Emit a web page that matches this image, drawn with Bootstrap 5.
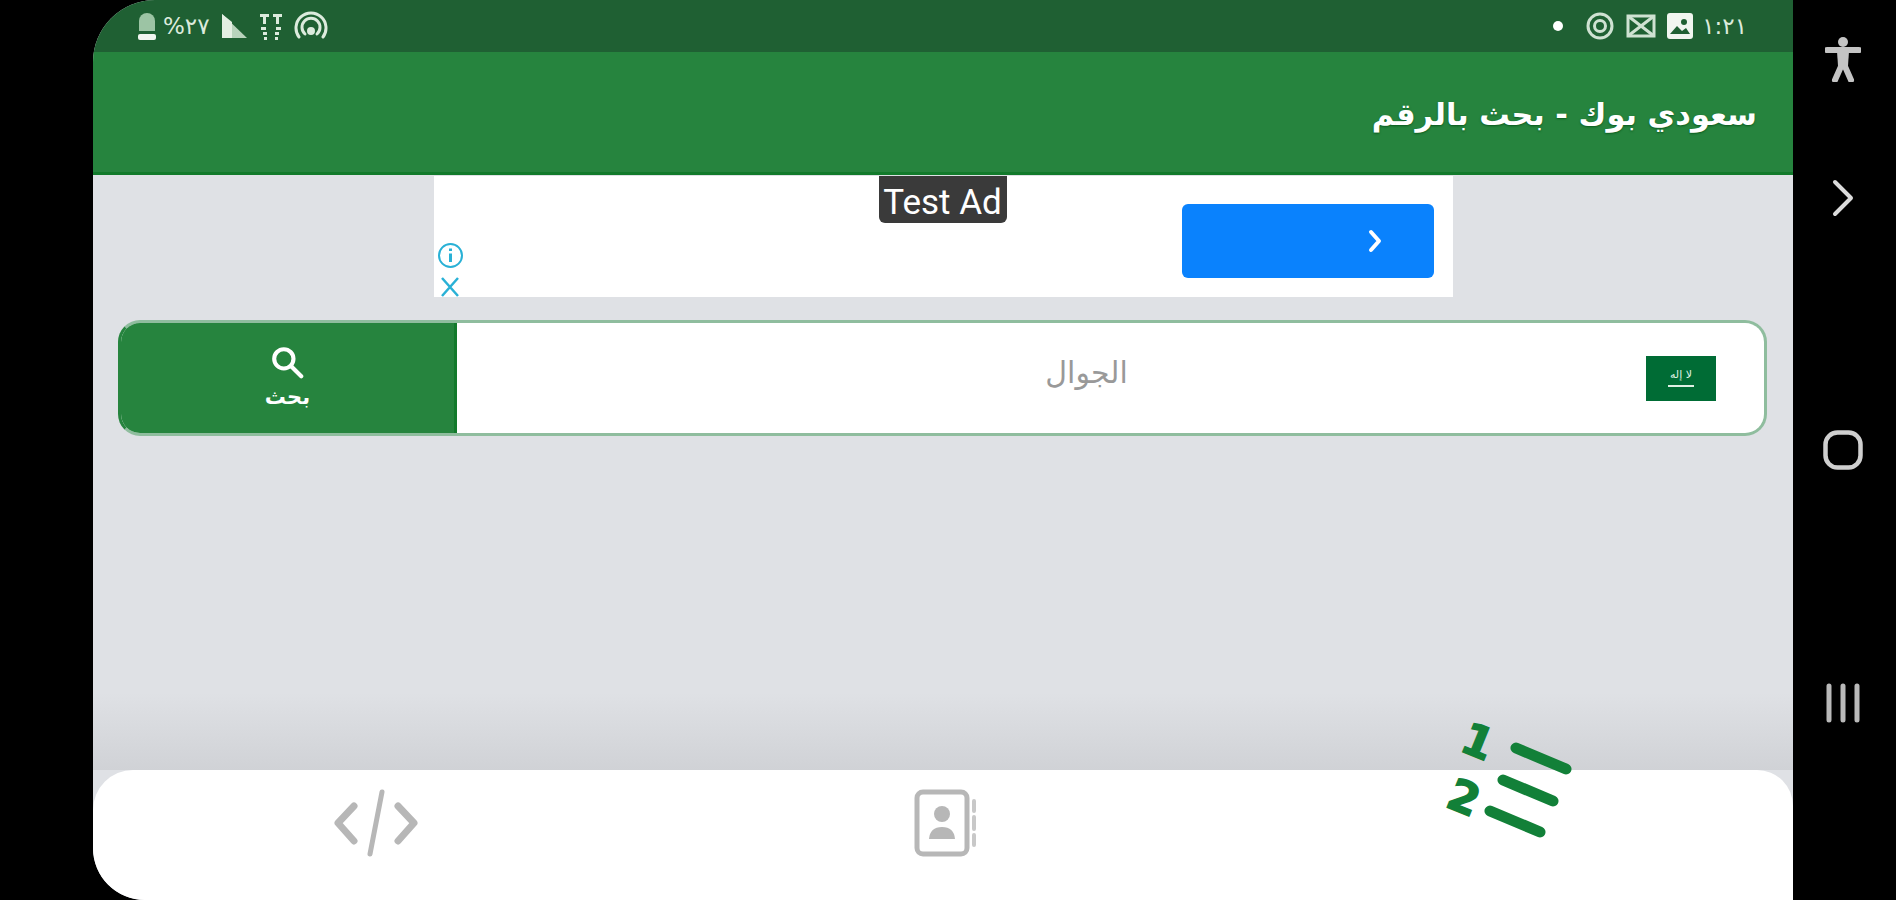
<!DOCTYPE html>
<html lang="ar">
<head>
<meta charset="utf-8">
<title>سعودي بوك</title>
<link rel="stylesheet" href="https://cdn.jsdelivr.net/npm/bootstrap@5.3.0/dist/css/bootstrap.min.css">
<style>
html,body{height:900px;overflow:hidden;background:#000;}
body{font-family:"DejaVu Sans","Liberation Sans",sans-serif;}
.stage{height:900px;background:#000;padding-left:93px;}
.phone{width:1700px;height:900px;overflow:hidden;border-radius:62px 0 0 52px;background:#dfe1e5;}
.statusline{height:52px;background:#1f6033;color:#dcebdd;padding:0 46px 0 44px;font-size:23px;font-family:"DejaVu Sans",sans-serif;}
.appline{height:123px;background:#26843e;border-bottom:3px solid #127a2b;padding:6px 36px 0 0;color:#fff;font-size:30.4px;font-weight:700;text-shadow:0 1px 2px #0a5a1e;}
.canvas{background:linear-gradient(#dfe1e5 0,#dfe1e5 87%,#d0d2d6 100%);}
.adbox{width:1019px;height:121px;background:#fff;margin:1px auto 0;position:relative;}
.adtag{position:absolute;top:0;left:445px;width:128px;height:47px;background:#3a3a3a;color:#fff;border-radius:0 0 6px 6px;font:400 35px/53px Roboto,sans-serif;text-align:center;}
.adbtn{width:252px;height:74px;background:#0a82fd;border-radius:6px;margin:28px 19px 0 0;padding-right:51px;}
.admarks{position:absolute;left:3px;top:66px;}
.searchbar{height:116px;margin:23px 26px 0 25px;border:3px solid #8fbd9e;border-left-color:#26843e;border-radius:22px;background:#fff;overflow:hidden;}
.searchbtn{width:336px;background:#26843e;border-right:3px solid #127a2b;color:#fff;font-size:21px;font-weight:700;}
.searchfield{color:#999;font-size:30px;padding:0 0 12px 70px;}
.flagbox{width:70px;height:45px;background:#006c35;color:#dff0e4;margin-right:48px;font-size:11px;line-height:1;}
.navstrip{height:130px;background:#fff;border-radius:40px 36px 0 0;position:relative;}
.navcell{width:33.333%;padding-bottom:24px;}
.listmark{position:absolute;left:1343px;top:-66px;}
.rail{width:103px;height:900px;padding:37px 3px 0 0;}
.railgap1{margin-top:97px;}
.railgap2{margin-top:213px;}
.stepa{margin-left:10px;}
.stepb{margin-left:10px;}
</style>
</head>
<body>
<div class="stage d-flex">
  <div class="phone d-flex flex-column">
    <div class="statusline d-flex align-items-center justify-content-between flex-shrink-0">
      <div class="d-flex align-items-center">
        <svg width="20" height="30" viewBox="0 0 20 30"><path d="M2 20 V10 a8 8 0 0 1 16 0 V20Z" fill="#9cc4a4"/><rect x="1" y="23" width="18" height="6" rx="2" fill="#f1f6f0"/></svg>
        <span style="margin-left:6px;letter-spacing:-1px">%٢٧</span>
        <svg class="stepa" width="28" height="26" viewBox="0 0 28 26"><path d="M2 1 V25 H27 Z" fill="#b8d3bc"/><path d="M2 1 V25 H12 V9 Z" fill="#e4efe3"/></svg>
        <svg class="stepb" width="26" height="30" viewBox="0 0 26 30" fill="#dcebdd"><path d="M2 3h9v3H8v7H5V6H2zM15 3h9v3h-3v7h-3V6h-3zM3 16h5v3H3zM18 16h5v3h-5zM5 21h4v3H5zM17 21h4v3h-4zM6 26h3v3H6zM17 26h3v3h-3z"/></svg>
        <svg class="stepb" width="34" height="30" viewBox="0 0 34 30" fill="none" stroke="#dcebdd" stroke-width="3" stroke-linecap="round"><path d="M5 26 A15 15 0 1 1 29 26"/><path d="M11 23 A9 9 0 1 1 23 23"/><circle cx="17" cy="20" r="2.5" fill="#dcebdd"/></svg>
      </div>
      <div class="d-flex align-items-center">
        <svg width="10" height="10" viewBox="0 0 10 10" style="margin-right:23px"><circle cx="5" cy="5" r="5" fill="#fff"/></svg>
        <svg width="28" height="28" viewBox="0 0 28 28" fill="none" stroke="#cfe2d2" style="margin-right:12px"><circle cx="14" cy="14" r="12" stroke-width="3"/><circle cx="14" cy="14" r="5.5" stroke-width="3"/></svg>
        <svg width="30" height="24" viewBox="0 0 30 24" fill="none" stroke="#cfe2d2" stroke-width="3" style="margin-right:11px"><rect x="2" y="2" width="26" height="20"/><path d="M2 2 L15 12 L28 2 M2 22 L15 12 L28 22"/></svg>
        <svg width="26" height="26" viewBox="0 0 26 26" style="margin-right:9px"><rect width="26" height="26" rx="3" fill="#f1f6f0"/><circle cx="17" cy="9" r="3" fill="#1f6033"/><path d="M3 21 L10 13 L15 18 L19 15 L23 21Z" fill="#1f6033"/></svg>
        <span style="letter-spacing:-1px">١:٢١</span>
      </div>
    </div>
    <div class="appline d-flex align-items-center justify-content-end flex-shrink-0">
      <span dir="rtl">سعودي بوك - بحث بالرقم</span>
    </div>
    <div class="canvas flex-grow-1 d-flex flex-column">
      <div class="adbox d-flex justify-content-end">
        <div class="adtag">Test Ad</div>
        <div class="admarks d-flex flex-column align-items-center gap-2">
          <svg width="27" height="27" viewBox="0 0 27 27" fill="none" stroke="#29b1d6" stroke-width="2"><circle cx="13.5" cy="13.5" r="11.5"/><path d="M13.5 11.5 V20 M13.5 6.5 V9" stroke-width="3"/></svg>
          <svg width="20" height="20" viewBox="0 0 20 20" fill="none" stroke="#29b1d6" stroke-width="2.5"><path d="M2 1 L18 19 M18 1 L2 19"/></svg>
        </div>
        <div class="adbtn d-flex align-items-center justify-content-end">
          <svg width="16" height="24" viewBox="0 0 16 24" fill="none" stroke="#fff" stroke-width="4" stroke-linecap="round" stroke-linejoin="round"><path d="M4 3 L12 12 L4 21"/></svg>
        </div>
      </div>
      <div class="searchbar d-flex">
        <div class="searchbtn d-flex flex-column align-items-center justify-content-center">
          <svg width="33" height="33" viewBox="0 0 36 36" fill="none" stroke="#fff" stroke-width="4.5" stroke-linecap="round"><circle cx="14" cy="14" r="10.5"/><path d="M22 22 L33 33"/></svg>
          <span dir="rtl" class="mt-1" style="line-height:28px">بحث</span>
        </div>
        <div class="searchfield flex-grow-1 d-flex align-items-center justify-content-center">
          <span dir="rtl">الجوال</span>
        </div>
        <div class="d-flex align-items-center">
          <div class="flagbox d-flex flex-column align-items-center justify-content-center">
            <span dir="rtl">لا إله</span>
            <svg width="26" height="4" viewBox="0 0 26 4" class="mt-1"><rect y="1" width="26" height="2" fill="#dff0e4"/></svg>
          </div>
        </div>
      </div>
    </div>
    <div class="navstrip d-flex flex-shrink-0">
      <div class="navcell d-flex align-items-center justify-content-center">
        <svg width="84" height="68" viewBox="0 0 84 68" fill="none" stroke="#b7b7b7" stroke-width="7" stroke-linecap="round" stroke-linejoin="round"><path d="M20 17 L4 34 L20 52 M64 17 L80 34 L64 52"/><path d="M48 3 L36 65" stroke-width="5"/></svg>
      </div>
      <div class="navcell d-flex align-items-center justify-content-center" style="padding-left:4px">
        <svg width="62" height="68" viewBox="0 0 62 68"><rect x="3" y="3" width="50" height="62" rx="6" fill="none" stroke="#b7b7b7" stroke-width="5"/><circle cx="28" cy="25" r="8" fill="#b7b7b7"/><path d="M15 50 Q16 38 28 38 Q40 38 41 50Z" fill="#b7b7b7"/><path d="M60 12 V22 M60 28 V40 M60 46 V56" stroke="#c8c8c8" stroke-width="4" stroke-linecap="round"/></svg>
      </div>
      <div class="navcell"></div>
      <svg class="listmark" width="150" height="140" viewBox="0 0 150 140" fill="none" stroke="#128038" stroke-width="11" stroke-linecap="round">
        <path d="M80 44 L130 65 M67 76 L117 97 M54 107 L104 128"/>
        <text x="0" y="0" transform="translate(22 46) rotate(22)" fill="#128038" stroke="#128038" stroke-width="1.5" font-family="DejaVu Sans, sans-serif" font-weight="700" font-size="44">1</text>
        <text x="0" y="0" transform="translate(8 102) rotate(22)" fill="#128038" stroke="#128038" stroke-width="1.5" font-family="DejaVu Sans, sans-serif" font-weight="700" font-size="44">2</text>
      </svg>
    </div>
  </div>
  <div class="rail d-flex flex-column align-items-center">
    <svg width="36" height="45" viewBox="0 0 36 45"><circle cx="18" cy="5" r="5" fill="#c4c4c4"/><path d="M2 13 H34 M18 13 V25 M18 25 L10 43 M18 25 L26 43" stroke="#c4c4c4" stroke-width="6" stroke-linecap="round" fill="none"/><path d="M12 14 H24 L23 29 H13Z" fill="#c4c4c4"/></svg>
    <svg class="railgap1" width="24" height="38" viewBox="0 0 24 38" fill="none" stroke="#dcdcdc" stroke-width="4" stroke-linecap="round" stroke-linejoin="round"><path d="M4 3 L20 19 L4 35"/></svg>
    <svg class="railgap2" width="40" height="40" viewBox="0 0 40 40" fill="none" stroke="#cfcfcf" stroke-width="4.5"><rect x="2.5" y="2.5" width="35" height="35" rx="12"/></svg>
    <svg class="railgap2" width="36" height="40" viewBox="0 0 36 40" fill="none" stroke="#b9b9b9" stroke-width="5" stroke-linecap="round"><path d="M4 3 V37 M18 3 V37 M32 3 V37"/></svg>
  </div>
</div>
<script src="https://cdn.jsdelivr.net/npm/bootstrap@5.3.0/dist/js/bootstrap.bundle.min.js"></script>
</body>
</html>
